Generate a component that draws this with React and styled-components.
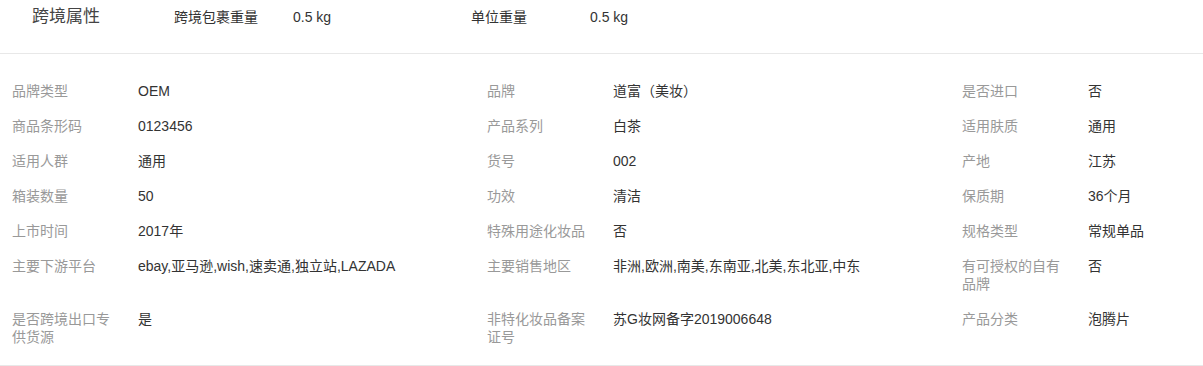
import React from 'react';
import styled, { createGlobalStyle } from 'styled-components';

const GlobalStyle = createGlobalStyle`
  html, body {
    margin: 0;
    padding: 0;
    background: #fff;
  }
  body {
    font-family: "Liberation Sans", "Noto Sans CJK SC", sans-serif;
    color: #333;
  }
`;

const Page = styled.div`
  width: 1203px;
  overflow: hidden;
`;

const CrossBorder = styled.div`
  display: flex;
  align-items: flex-start;
  height: 54px;
  box-sizing: border-box;
  padding: 7px 0 0 32px;
  border-bottom: 1px solid #e8e8e8;
`;

const SectionTitle = styled.div`
  width: 142px;
  font-size: 17px;
  line-height: 20px;
  color: #444;
`;

const Pair = styled.div`
  display: flex;
  width: 297px;
  padding-top: 1px;
  font-size: 14px;
  line-height: 18px;
`;

const PairLabel = styled.div`
  width: 119px;
  color: #333;
`;

const PairValue = styled.div`
  color: #333;
`;

const AttrGrid = styled.div`
  display: grid;
  grid-template-columns: 475px 475px 1fr;
  padding: 20px 0 10px 12px;
  border-bottom: 1px solid #e8e8e8;
`;

const Cell = styled.div`
  display: flex;
  align-items: flex-start;
  padding: 8px 0 9px;
  font-size: 14px;
  line-height: 18px;
`;

const Label = styled.div`
  flex: 0 0 110px;
  margin-right: 16px;
  color: #999;
`;

const Value = styled.div`
  flex: 1;
  color: #333;
`;

const attrs = [
  ['品牌类型', 'OEM'], ['品牌', '道富（美妆）'], ['是否进口', '否'],
  ['商品条形码', '0123456'], ['产品系列', '白茶'], ['适用肤质', '通用'],
  ['适用人群', '通用'], ['货号', '002'], ['产地', '江苏'],
  ['箱装数量', '50'], ['功效', '清洁'], ['保质期', '36个月'],
  ['上市时间', '2017年'], ['特殊用途化妆品', '否'], ['规格类型', '常规单品'],
  ['主要下游平台', 'ebay,亚马逊,wish,速卖通,独立站,LAZADA'],
  ['主要销售地区', '非洲,欧洲,南美,东南亚,北美,东北亚,中东'],
  ['有可授权的自有品牌', '否'],
  ['是否跨境出口专供货源', '是'], ['非特化妆品备案证号', '苏G妆网备字2019006648'], ['产品分类', '泡腾片'],
];

const App = () => {
  return (
    <Page>
      <GlobalStyle />
      <CrossBorder>
        <SectionTitle>跨境属性</SectionTitle>
        <Pair>
          <PairLabel>跨境包裹重量</PairLabel>
          <PairValue>0.5 kg</PairValue>
        </Pair>
        <Pair>
          <PairLabel>单位重量</PairLabel>
          <PairValue>0.5 kg</PairValue>
        </Pair>
      </CrossBorder>
      <AttrGrid>
        {attrs.map(([label, value], i) => (
          <Cell key={i}>
            <Label>{label}</Label>
            <Value>{value}</Value>
          </Cell>
        ))}
      </AttrGrid>
    </Page>
  );
};

export default App;
